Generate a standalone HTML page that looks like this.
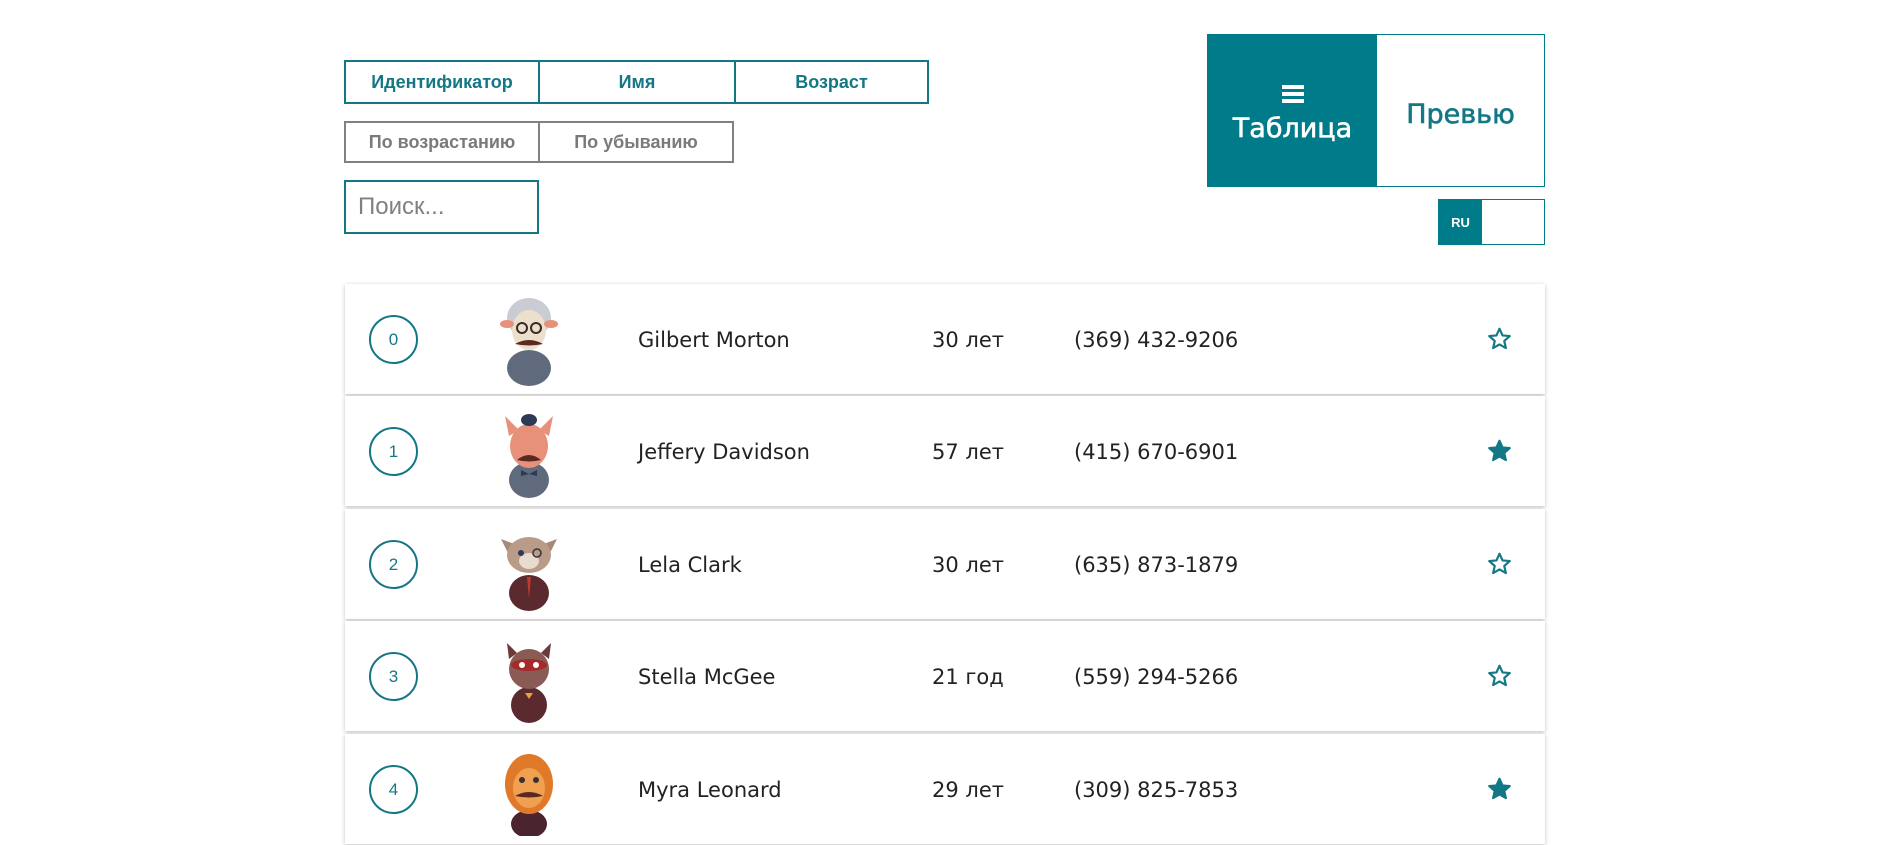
<!DOCTYPE html>
<html><head><meta charset="utf-8"><style>
*{box-sizing:border-box;margin:0;padding:0}
body{width:1895px;height:832px;background:#fff;font-family:"Liberation Sans",sans-serif;position:relative;overflow:hidden}
.abs{position:absolute}
.btn{position:absolute;display:flex;align-items:center;justify-content:center;font-weight:bold;font-size:18px}
.s{border:2px solid #137785;color:#137785;top:60px;height:44px}
.o{border:2px solid #808080;color:#7a7a7a;top:121px;height:42px}
.row{position:absolute;left:345px;width:1200px;height:110px;background:#fff;box-shadow:0 1px 4px rgba(0,0,0,.25)}
.num{position:absolute;left:24px;top:31px;width:49px;height:49px;border:2.5px solid #137785;border-radius:50%;display:flex;align-items:center;justify-content:center;color:#137785;font-size:17px}
.t{position:absolute;top:1px;line-height:110px;color:#222;font-family:"DejaVu Sans","Liberation Sans",sans-serif;font-size:21px}
.av{position:absolute;left:148px;top:12px}
.star{position:absolute;left:1141px;top:42px}
.big{font-family:'DejaVu Sans',sans-serif;font-size:27px;-webkit-text-stroke:0.6px currentColor}
</style></head><body>
<div class="btn s" style="left:344px;width:196px">Идентификатор</div>
<div class="btn s" style="left:538px;width:198px">Имя</div>
<div class="btn s" style="left:734px;width:195px">Возраст</div>
<div class="btn o" style="left:344px;width:196px">По возрастанию</div>
<div class="btn o" style="left:538px;width:196px">По убыванию</div>
<div class="abs" style="left:344px;top:180px;width:195px;height:54px;border:2px solid #137785;color:#808080;font-size:24px;padding-left:12px;line-height:50px">Поиск...</div>

<div class="abs" style="left:1207px;top:34px;width:338px;height:153px;border:1.5px solid #007b8a;display:flex">
 <div class="big" style="width:169px;background:#007b8a;color:#fff;display:flex;flex-direction:column;align-items:center;justify-content:center;padding-top:8px">
  <div style="width:22px;height:18px;border-top:4px solid #fff;border-bottom:4px solid #fff;position:relative;margin-bottom:10px"><div style="position:absolute;top:3px;left:0;width:22px;height:4px;background:#fff"></div></div>Таблица</div>
 <div class="big" style="flex:1;color:#137785;display:flex;align-items:center;justify-content:center;padding-top:8px">Превью</div>
</div>
<div class="abs" style="left:1438px;top:199px;width:107px;height:46px;border:1.5px solid #007b8a;display:flex">
 <div style="width:43px;background:#007b8a;color:#fff;font-weight:bold;font-size:13px;display:flex;align-items:center;justify-content:center">RU</div>
</div>

<div class="row" style="top:284px"><div class="num">0</div>
<svg class="av" width="72" height="90" viewBox="0 0 72 90"><ellipse cx="36" cy="22" rx="22" ry="20" fill="#c9ccd3"/><ellipse cx="36" cy="72" rx="22" ry="18" fill="#5f6b7c"/><ellipse cx="36" cy="34" rx="17" ry="20" fill="#ecdfcc"/><ellipse cx="14" cy="28" rx="7" ry="4" fill="#e8917a"/><ellipse cx="58" cy="28" rx="7" ry="4" fill="#e8917a"/><circle cx="29" cy="32" r="5" fill="none" stroke="#3a2a2a" stroke-width="2"/><circle cx="43" cy="32" r="5" fill="none" stroke="#3a2a2a" stroke-width="2"/><path d="M22 48q14-8 28 0q-14 3-28 0z" fill="#5a2a22"/></svg>
<div class="t" style="left:293px">Gilbert Morton</div><div class="t" style="left:587px">30 лет</div><div class="t" style="left:729px">(369) 432-9206</div>
<svg class="star" width="27" height="26" viewBox="0 0 24 24"><path d="M12 2.5l2.8 6.2 6.7.6-5.1 4.5 1.5 6.6L12 17l-5.9 3.4 1.5-6.6-5.1-4.5 6.7-.6z" fill="none" stroke="#137785" stroke-width="2" stroke-linejoin="round"/></svg></div>

<div class="row" style="top:396px"><div class="num">1</div>
<svg class="av" width="72" height="90" viewBox="0 0 72 90"><ellipse cx="36" cy="72" rx="20" ry="18" fill="#5f6b7c"/><path d="M12 8l14 14-10 6z M60 8L46 22l10 6z" fill="#e8917a"/><ellipse cx="36" cy="38" rx="19" ry="22" fill="#e8917a"/><ellipse cx="36" cy="12" rx="8" ry="6" fill="#2d3a55"/><path d="M24 52q12-10 24 0q-12 3-24 0z" fill="#5a2a22"/><path d="M28 62l8 4 8-4v6l-8-2-8 2z" fill="#2d3a55"/></svg>
<div class="t" style="left:293px">Jeffery Davidson</div><div class="t" style="left:587px">57 лет</div><div class="t" style="left:729px">(415) 670-6901</div>
<svg class="star" width="27" height="26" viewBox="0 0 24 24"><path d="M12 2.5l2.8 6.2 6.7.6-5.1 4.5 1.5 6.6L12 17l-5.9 3.4 1.5-6.6-5.1-4.5 6.7-.6z" fill="#137785" stroke="#137785" stroke-width="2" stroke-linejoin="round"/></svg></div>

<div class="row" style="top:509px"><div class="num">2</div>
<svg class="av" width="72" height="90" viewBox="0 0 72 90"><ellipse cx="36" cy="72" rx="20" ry="18" fill="#5b2a2e"/><path d="M8 18l16 6-6 14z M64 18l-16 6 6 14z" fill="#a68a78"/><ellipse cx="36" cy="34" rx="22" ry="18" fill="#b89b88"/><ellipse cx="36" cy="40" rx="10" ry="8" fill="#e8dcd0"/><circle cx="28" cy="32" r="3" fill="#2d3a55"/><circle cx="44" cy="32" r="4" fill="none" stroke="#333" stroke-width="1.5"/><path d="M34 56l2 22 2-22z" fill="#c0392b"/></svg>
<div class="t" style="left:293px">Lela Clark</div><div class="t" style="left:587px">30 лет</div><div class="t" style="left:729px">(635) 873-1879</div>
<svg class="star" width="27" height="26" viewBox="0 0 24 24"><path d="M12 2.5l2.8 6.2 6.7.6-5.1 4.5 1.5 6.6L12 17l-5.9 3.4 1.5-6.6-5.1-4.5 6.7-.6z" fill="none" stroke="#137785" stroke-width="2" stroke-linejoin="round"/></svg></div>

<div class="row" style="top:621px"><div class="num">3</div>
<svg class="av" width="72" height="90" viewBox="0 0 72 90"><ellipse cx="36" cy="72" rx="18" ry="18" fill="#5b2a2e"/><path d="M14 10l10 10-8 6z M58 10L48 20l8 6z" fill="#6b3b3b"/><ellipse cx="36" cy="36" rx="20" ry="20" fill="#8a5a55"/><ellipse cx="36" cy="32" rx="18" ry="6" fill="#a52a2a"/><circle cx="29" cy="32" r="3" fill="#fff"/><circle cx="43" cy="32" r="3" fill="#fff"/><path d="M32 60h8l-4 6z" fill="#e8a040"/></svg>
<div class="t" style="left:293px">Stella McGee</div><div class="t" style="left:587px">21 год</div><div class="t" style="left:729px">(559) 294-5266</div>
<svg class="star" width="27" height="26" viewBox="0 0 24 24"><path d="M12 2.5l2.8 6.2 6.7.6-5.1 4.5 1.5 6.6L12 17l-5.9 3.4 1.5-6.6-5.1-4.5 6.7-.6z" fill="none" stroke="#137785" stroke-width="2" stroke-linejoin="round"/></svg></div>

<div class="row" style="top:734px;height:110px"><div class="num">4</div>
<svg class="av" width="72" height="90" viewBox="0 0 72 90"><ellipse cx="36" cy="78" rx="18" ry="14" fill="#4a2530"/><ellipse cx="36" cy="38" rx="24" ry="30" fill="#e07a2a"/><ellipse cx="36" cy="42" rx="16" ry="20" fill="#f0a050"/><circle cx="29" cy="34" r="3" fill="#333"/><circle cx="43" cy="34" r="3" fill="#333"/><path d="M22 50q14-8 28 0q-14 3-28 0z" fill="#5a2a22"/></svg>
<div class="t" style="left:293px">Myra Leonard</div><div class="t" style="left:587px">29 лет</div><div class="t" style="left:729px">(309) 825-7853</div>
<svg class="star" width="27" height="26" viewBox="0 0 24 24"><path d="M12 2.5l2.8 6.2 6.7.6-5.1 4.5 1.5 6.6L12 17l-5.9 3.4 1.5-6.6-5.1-4.5 6.7-.6z" fill="#137785" stroke="#137785" stroke-width="2" stroke-linejoin="round"/></svg></div>
</body></html>
